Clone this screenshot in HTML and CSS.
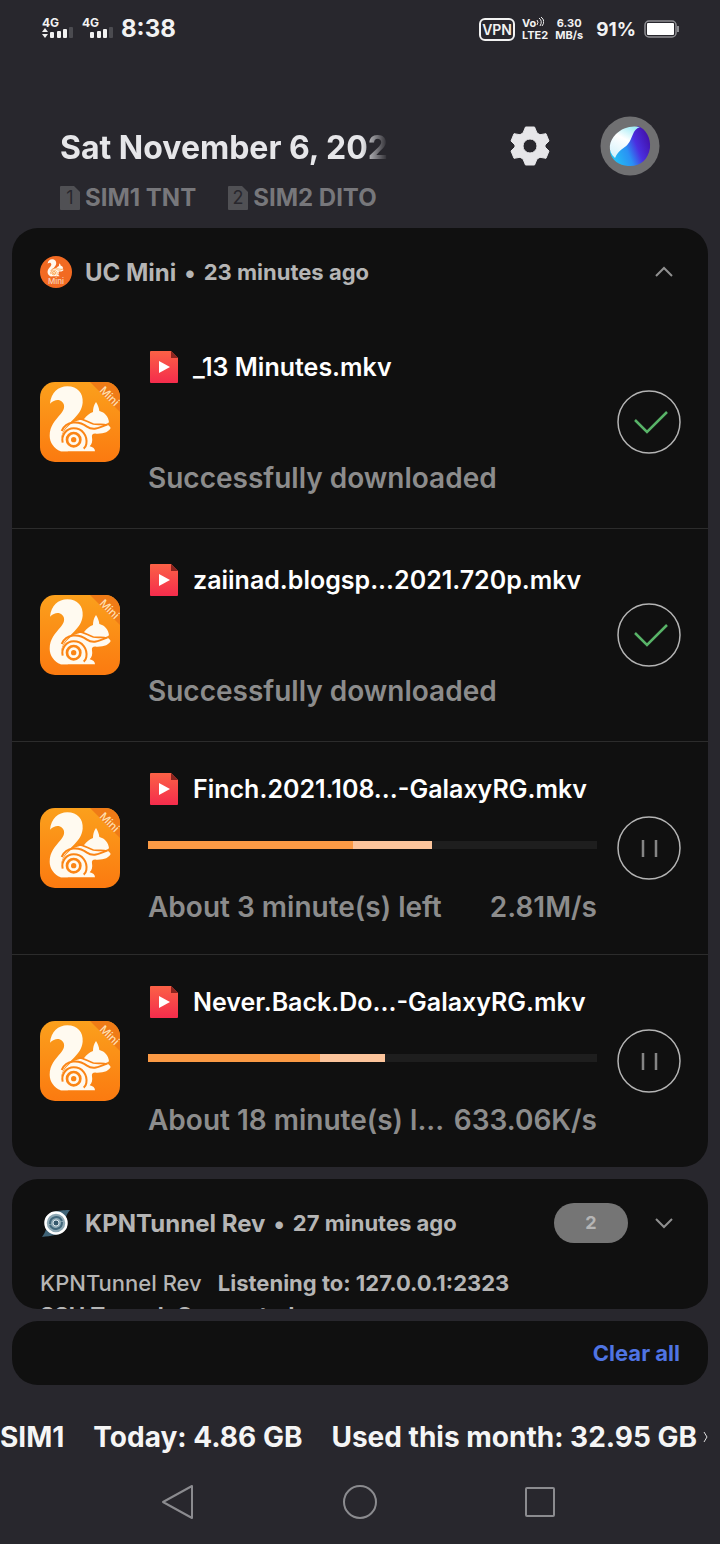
FILE: index.html
```html
<!DOCTYPE html>
<html lang="en">
<head>
<meta charset="utf-8">
<meta name="viewport" content="width=device-width, initial-scale=1">
<title>Notifications</title>
<link rel="stylesheet" href="styles.css">
</head>
<body>
<svg class="defs" width="0" height="0" aria-hidden="true">
  <defs>
    <linearGradient id="orange" x1="0" y1="0" x2="0" y2="1"><stop offset="0" stop-color="#fba01c"/><stop offset="1" stop-color="#fb7a10"/></linearGradient>
    <linearGradient id="red" x1="0" y1="0" x2="0" y2="1"><stop offset="0" stop-color="#fb6146"/><stop offset="1" stop-color="#f52c4c"/></linearGradient>
    <linearGradient id="violet" x1="0" y1="0.700" x2="1" y2="0.300"><stop offset="0" stop-color="#22c4f4"/><stop offset="0.400" stop-color="#2a90f4"/><stop offset="0.650" stop-color="#4a2fe0"/><stop offset="1" stop-color="#4210a8"/></linearGradient>
    <linearGradient id="white" x1="0.700" y1="0" x2="0.200" y2="1"><stop offset="0" stop-color="#a4ecf6"/><stop offset="0.400" stop-color="#ffffff"/><stop offset="1" stop-color="#d4f2fb"/></linearGradient>
    <symbol id="squirrel" viewBox="30 36 240 240">
      <path fill="#fffaf0" d="M60 101C63 68 85 49 112 49c31 0 48 21 46 49-2 21-13 34-26 48-16 17-37 33-39 62-1 13 5 25 15 31l6 5H92c-20-8-33-27-33-47 0-29 17-46 33-65 12-14 14-28 4-37-9-8-24-6-36 6z"/>
      <path fill="#fffaf0" d="M198 96c5 8 9 17 10 27 17 4 28 18 29 34l-7 5c6 4 10 8 12 12-5 11-20 18-44 17-9-1-14 3-12 11 2 12 0 20-7 27 10 2 16 7 16 15H92c-6-40 8-66 33-84 14-10 26-9 38-14 6-8 14-15 26-20 0-10 2-20 9-30z"/>
      <g fill="none" stroke="#fb8515">
        <path stroke-width="6" d="M95 183c14-32 52-31 76-13 19 13 38 3 62-7"/>
        <path stroke-width="5" d="M144 145c18 2 30 12 46 17 13 3 28-1 40 3"/>
        <path stroke-width="6" d="M98 218c-5-24 12-43 33-43 26 0 42 22 38 47-1 6-4 11-8 14"/>
        <circle cx="131" cy="209" r="20" stroke-width="8"/>
      </g>
      <circle cx="131" cy="209" r="8" fill="#fb8515"/>
    </symbol>
    <symbol id="app" viewBox="0 0 80 80">
      <clipPath id="round"><rect width="80" height="80" rx="15"/></clipPath>
      <g clip-path="url(#round)">
        <rect width="80" height="80" fill="url(#orange)"/>
        <path d="M50 0h30v30z" fill="#ef7b16"/>
        <text class="ribbon" x="0" y="0" transform="translate(59 9) rotate(45)">Mini</text>
      </g>
      <use href="#squirrel" width="80" height="80"/>
    </symbol>
    <symbol id="video" viewBox="0 0 28 32">
      <path d="M1 0h20l7 7v24a1 1 0 0 1-1 1H1a1 1 0 0 1-1-1V1a1 1 0 0 1 1-1z" fill="url(#red)"/>
      <path d="M21 0l7 7h-7z" fill="#8c241f"/>
      <path d="M9 10l11 6-11 6z" fill="#fff"/>
    </symbol>
    <symbol id="check" viewBox="0 0 64 64">
      <circle cx="32" cy="32" r="31" fill="none" stroke="#b4b4b4" stroke-width="1.500"/>
      <path d="M18 30l12 12 20-20" fill="none" stroke="#58b368" stroke-width="2.500"/>
    </symbol>
    <symbol id="pause" viewBox="0 0 64 64">
      <circle cx="32" cy="32" r="31" fill="none" stroke="#b4b4b4" stroke-width="1.500"/>
      <path d="M26 24v17M39 24v17" fill="none" stroke="#858585" stroke-width="2.500"/>
    </symbol>
  </defs>
</svg>

<div class="shade">
  <header class="status">
    <svg class="signals" viewBox="0 0 74 24" aria-label="4G signal">
      <g fill="#f2f2f2">
        <text class="net" x="0" y="10">4G</text><text class="net" x="40" y="10">4G</text>
        <path d="M0 15l3-4 3 4zM0 17h6l-3 4z"/>
        <rect x="8" y="15" width="4" height="6" rx="1"/><rect x="15" y="14" width="4" height="7" rx="1"/><rect x="21" y="12" width="4" height="9" rx="1"/>
        <rect x="48" y="15" width="4" height="6" rx="1"/><rect x="55" y="14" width="4" height="7" rx="1"/><rect x="61" y="12" width="4" height="9" rx="1"/>
      </g>
      <rect x="27" y="10" width="4" height="11" rx="1" fill="#4b4b50"/><rect x="67" y="10" width="4" height="11" rx="1" fill="#4b4b50"/>
    </svg>
    <time class="clock">8:38</time>
    <span class="vpn">VPN</span>
    <span class="tiny"><span class="vo">Vo<svg viewBox="0 0 8 9" width="8" height="9"><path d="M1 3q2 2 0 5M3 1q4 3 1 8M5 0q5 4 1 9" fill="none" stroke="#eee"/></svg></span><span>LTE2</span></span>
    <span class="tiny speed"><span>6.30</span><span>MB/s</span></span>
    <span class="percent">91%</span>
    <svg class="battery" viewBox="0 0 36 18" aria-label="Battery"><rect x="1" y="1" width="31" height="16" rx="4" fill="none" stroke="#8f8f93" stroke-width="1.500"/><rect x="3" y="3" width="27" height="12" rx="1" fill="#fff"/><path d="M34 6v6" stroke="#8f8f93" stroke-width="2"/></svg>
  </header>

  <section class="top">
    <div class="when">
      <h1 class="date">Sat November 6, 202</h1>
      <div class="sims">
        <span class="sim"><svg viewBox="0 0 20 24" width="20" height="24"><path d="M1 0h13l6 6v17a1 1 0 0 1-1 1H1a1 1 0 0 1-1-1V1a1 1 0 0 1 1-1z" fill="#505054"/><text class="slot" x="10" y="18">1</text></svg>SIM1 TNT</span>
        <span class="sim"><svg viewBox="0 0 20 24" width="20" height="24"><path d="M1 0h13l6 6v17a1 1 0 0 1-1 1H1a1 1 0 0 1-1-1V1a1 1 0 0 1 1-1z" fill="#505054"/><text class="slot" x="10" y="18">2</text></svg>SIM2 DITO</span>
      </div>
    </div>
    <div class="tools">
      <button class="bare" aria-label="Settings"><svg viewBox="0 0 40 40" width="40" height="40"><path fill="#e6e6e9" stroke="#e6e6e9" stroke-linejoin="round" fill-rule="evenodd" d="M15.500 1h9l2.500 6 3 1.700 6-1 3 7.300-4 4v2l4 4-3 7.300-6-1-3 1.700-2.500 6h-9l-2.500-6-3-1.700-6 1-3-7.300 4-4v-2l-4-4 3-7.300 6 1 3-1.700zM20 13a7 7 0 1 0 0 14 7 7 0 0 0 0-14z"/></svg></button>
      <button class="bare" aria-label="Assistant"><svg viewBox="0 0 60 60" width="60" height="60"><circle cx="30" cy="30" r="29.500" fill="#707072"/><path fill="url(#violet)" d="M38 10C46 13 51 22 50 32c-2 12-10 19-22 18C19 49 12 45 10 36c2-6 9-9 14-11 7-4 7-11 14-15z"/><path fill="url(#white)" d="M40 11c-8 3-7 11-12 17-4 5-9 5-13 14C7 35 9 25 16 18c6-6 15-9 24-7z"/></svg></button>
    </div>
  </section>

  <main class="cards">
    <section class="card">
      <div class="head">
        <svg class="mark" viewBox="0 0 32 32"><circle cx="16" cy="16" r="16" fill="#f26a22"/><use href="#squirrel" x="5" y="2" width="21" height="21"/><text class="badge-text" x="16" y="28">Mini</text></svg>
        <h2 class="name">UC Mini</h2><span class="dot">•</span><span class="ago">23 minutes ago</span>
        <button class="bare chevron" aria-label="Collapse"><svg viewBox="0 0 20 12" width="20" height="12"><path d="M2 10l8-8 8 8"/></svg></button>
      </div>
      <article class="row">
        <svg class="app"><use href="#app"/></svg>
        <div class="info done"><h3 class="file"><svg class="video"><use href="#video"/></svg>_13 Minutes.mkv</h3><p class="state"><span>Successfully downloaded</span></p></div>
        <button class="bare" aria-label="Completed"><svg class="act"><use href="#check"/></svg></button>
      </article>
      <article class="row">
        <svg class="app"><use href="#app"/></svg>
        <div class="info done"><h3 class="file"><svg class="video"><use href="#video"/></svg>zaiinad.blogsp...2021.720p.mkv</h3><p class="state"><span>Successfully downloaded</span></p></div>
        <button class="bare" aria-label="Completed"><svg class="act"><use href="#check"/></svg></button>
      </article>
      <article class="row">
        <svg class="app"><use href="#app"/></svg>
        <div class="info"><h3 class="file"><svg class="video"><use href="#video"/></svg>Finch.2021.108...-GalaxyRG.mkv</h3>
          <div class="bar"><div class="loaded" style="width:45.700%"></div><div class="buffer" style="width:17.600%"></div></div>
          <p class="state"><span>About 3 minute(s) left</span><span>2.81M/s</span></p></div>
        <button class="bare" aria-label="Pause"><svg class="act"><use href="#pause"/></svg></button>
      </article>
      <article class="row">
        <svg class="app"><use href="#app"/></svg>
        <div class="info"><h3 class="file"><svg class="video"><use href="#video"/></svg>Never.Back.Do...-GalaxyRG.mkv</h3>
          <div class="bar"><div class="loaded" style="width:38.300%"></div><div class="buffer" style="width:14.500%"></div></div>
          <p class="state"><span>About 18 minute(s) l...</span><span>633.06K/s</span></p></div>
        <button class="bare" aria-label="Pause"><svg class="act"><use href="#pause"/></svg></button>
      </article>
    </section>

    <section class="card peek">
      <div class="head">
        <svg class="mark" viewBox="0 0 32 32"><path d="M30 3C22 3 8 4 5 12l20 6c0-6 1-10 5-15zM2 30c8-1 21-2 25-10L7 14c0 6-1 11-5 16z" fill="#3f6377"/><circle cx="16" cy="16" r="10.500" fill="#8fa9b5" stroke="#fff" stroke-width="2.500"/><path d="M10 17c0-8 9-9 12-3M22 15c0 8-9 9-12 3" fill="none" stroke="#42687c" stroke-width="2"/><circle cx="16" cy="16" r="3" fill="#35586c" stroke="#dce8ee"/></svg>
        <h2 class="name">KPNTunnel Rev</h2><span class="dot">•</span><span class="ago">27 minutes ago</span>
        <span class="count">2</span>
        <button class="bare chevron" aria-label="Expand"><svg viewBox="0 0 20 12" width="20" height="12"><path d="M2 2l8 8 8-8"/></svg></button>
      </div>
      <p class="line"><span>KPNTunnel Rev</span><b>Listening to: 127.0.0.1:2323</b></p>
      <p class="line"><b>SSH Tunnel: Connected</b></p>
    </section>

    <section class="card clear"><button class="bare clear-all">Clear all</button></section>
  </main>

  <a class="usage" href="#"><span>SIM1</span><span>Today: 4.86 GB</span><span>Used this month: 32.95 GB</span><svg viewBox="0 0 6 12" width="6" height="12"><path d="M1 1l3 5-3 5" fill="none" stroke="#ddd"/></svg></a>

  <nav class="nav">
    <button class="bare" aria-label="Back"><svg viewBox="0 0 36 36" width="36" height="36"><path d="M30 2v32L1 18z"/></svg></button>
    <button class="bare" aria-label="Home"><svg viewBox="0 0 36 36" width="36" height="36"><circle cx="18" cy="18" r="16"/></svg></button>
    <button class="bare" aria-label="Recent apps"><svg viewBox="0 0 36 36" width="36" height="36"><rect x="4" y="4" width="28" height="28" rx="1"/></svg></button>
  </nav>
</div>
</body>
</html>
```
FILE: styles.css
```css
* { box-sizing: border-box; }
body { margin: 0; background: #28272d; font-family: Inter, Roboto, sans-serif; font-weight: 650; color: #b5b5b5; }
h1, h2, h3, p { margin: 0; font-weight: 650; }
svg { display: block; flex: none; }
.defs { position: absolute; }
.bare { display: block; padding: 0; border: 0; background: none; font: inherit; color: inherit; cursor: pointer; }
.shade { display: flex; flex-direction: column; min-height: 100vh; overflow: hidden; }

.status { display: flex; align-items: center; height: 58px; padding: 0 40px 0 42px; color: #f2f2f2; }
.signals { width: 74px; height: 24px; overflow: visible; }
.net { font-size: 12px; font-weight: 700; }
.clock { margin: 0 auto 0 5px; font-size: 24px; line-height: 32px; }
.vpn { padding: 0 1px; border: 2px solid #f2f2f2; border-radius: 6px; font-size: 14px; line-height: 19px; font-weight: 600; }
.tiny { display: flex; flex-direction: column; margin-left: 7px; font-size: 11px; line-height: 12px; }
.vo { display: flex; }
.speed { align-items: center; }
.percent { margin: 0 8px 0 13px; font-size: 19px; }
.battery { width: 36px; height: 18px; }

.top { display: flex; justify-content: space-between; padding: 58px 60px 0; }
.when { min-width: 0; }
.date { white-space: nowrap; width: max-content; font-size: 32px; line-height: 64px; font-weight: 700; color: #e6e6e9; mask-image: linear-gradient(to right, #000 92%, transparent); }
.sims { display: flex; gap: 32px; font-size: 24px; line-height: 36px; font-weight: 700; color: #77777b; }
.sim { display: flex; align-items: center; gap: 5px; white-space: nowrap; }
.slot { font-size: 18px; font-weight: 400; text-anchor: middle; fill: #28272d; }
.tools { display: flex; align-items: center; gap: 50px; height: 60px; }

.cards { display: flex; flex-direction: column; gap: 12px; padding: 12px 12px 0; }
.card { border-radius: 26px; background: #101010; overflow: hidden; }
.head { display: flex; align-items: center; height: 88px; padding: 0 34px 0 28px; white-space: nowrap; }
.mark { width: 32px; height: 32px; margin-right: 13px; }
.name { font-size: 24px; }
.dot { margin: 0 8px; font-size: 24px; }
.ago { font-size: 22px; font-weight: 700; }
.chevron { margin-left: auto; }
.chevron path { fill: none; stroke: #909090; stroke-width: 2; }

.row { display: flex; align-items: center; gap: 28px; height: 213px; padding: 0 27px 0 28px; border-bottom: 1px solid #2c2c2c; }
.row:last-child { height: 212px; border-bottom: 0; }
.app { width: 80px; height: 80px; }
.ribbon { font-size: 11px; font-weight: 500; fill: #ffdfae; }
.badge-text { font-size: 8px; font-weight: 500; text-anchor: middle; fill: #fbd3b8; }
.info { display: flex; flex: 1; flex-direction: column; justify-content: space-between; min-width: 0; height: 154px; margin-right: -8px; white-space: nowrap; }
.done { height: 147px; }
.file { display: flex; align-items: center; gap: 15px; padding-left: 2px; font-size: 25px; line-height: 36px; font-weight: 625; color: #fff; }
.video { width: 28px; height: 32px; }
.state { display: flex; justify-content: space-between; font-size: 28px; line-height: 36px; font-weight: 625; color: #8c8c8c; }
.bar { display: flex; height: 8px; margin-bottom: 6px; background: #1e1e1e; }
.loaded { background: #fb9a45; }
.buffer { background: #fcc49b; }
.act { width: 64px; height: 64px; }

.peek { height: 130px; }
.count { width: 74px; margin-left: auto; border-radius: 20px; background: #757575; font-size: 18px; line-height: 40px; text-align: center; }
.count + .chevron { margin-left: 26px; }
.line { display: flex; gap: 16px; padding: 0 28px; font-size: 22px; line-height: 32px; font-weight: 500; white-space: nowrap; }
.line b { font-weight: 700; }
.clear { display: flex; justify-content: flex-end; padding: 0 28px; }
.clear-all { font-size: 22px; line-height: 64px; color: #4f74e3; }

.usage { display: flex; align-items: center; gap: 29px; height: 94px; margin-top: 5px; color: #f5f5f5; font-size: 28px; text-decoration: none; white-space: nowrap; }
.usage svg { margin-left: -23px; }
.nav { display: flex; justify-content: center; align-items: flex-start; gap: 144px; height: 60px; }
.nav path, .nav circle, .nav rect { fill: none; stroke: #8b8b8f; stroke-width: 2; stroke-linejoin: round; }
```
